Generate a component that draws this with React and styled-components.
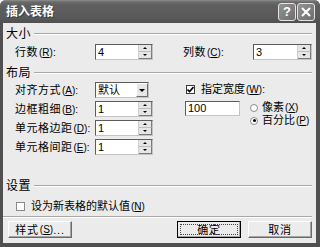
import styled, { createGlobalStyle } from "styled-components";

const GlobalStyle = createGlobalStyle`
  html, body { margin: 0; padding: 0; background: #fff; }
  body {
    font-family: "Liberation Sans", "Noto Sans CJK SC", sans-serif;
    font-size: 11px;
    color: #000;
  }
`;

const Window = styled.div`
  width: 320px;
  height: 247px;
  display: flex;
  flex-direction: column;
  background: #505050;
  border-radius: 6px 6px 0 0;
  overflow: hidden;
`;

const TitleBar = styled.div`
  height: 23px;
  flex: none;
  display: flex;
  align-items: center;
  padding: 0 5px 0 6px;
  background: linear-gradient(#8e8e8e 0, #6a6a6a 2px, #5e5e5e 6px, #5a5a5a 17px, #4f4f4f 23px);
`;

const Title = styled.div`
  flex: 1;
  color: #fff;
  font-weight: bold;
  font-size: 12px;
  line-height: 14px;
  text-shadow: 1px 1px 0 #3c3c3c;
`;

const CaptionButton = styled.div`
  width: 18px;
  height: 18px;
  box-sizing: border-box;
  border: 1px solid #e4e4e4;
  border-radius: 3px;
  background: linear-gradient(135deg, #929292, #6e6e6e);
  display: flex;
  align-items: center;
  justify-content: center;
  color: #fff;
  font-weight: bold;
  font-size: 13px;
  line-height: 13px;
  & + & { margin-left: 1px; }
`;

const Frame = styled.div`
  flex: 1;
  display: flex;
  padding: 0 4px 4px 3px;
`;

const Body = styled.div`
  flex: 1;
  background: #ebebeb;
  display: flex;
  flex-direction: column;
  padding: 0 4px 0 3px;
`;

const Legend = styled.div`
  display: flex;
  align-items: center;
  height: 12px;
  line-height: 12px;
  font-size: 12px;
  letter-spacing: 0.5px;
  margin-top: ${(p) => p.$top}px;
  &::after {
    content: "";
    flex: 1;
    border-top: 1px solid #a8a8a8;
    border-bottom: 1px solid #fff;
    margin-left: 3px;
  }
`;

const SizeRow = styled.div`
  display: grid;
  grid-template-columns: 80px 58px 1fr 59px;
  align-items: center;
  height: 16px;
  margin: 4px 0 0 9px;
`;

const Label = styled.div`
  white-space: nowrap;
  line-height: 12px;
  letter-spacing: ${(p) => (p.$tight ? "0" : "0.5px")};
  padding-left: ${(p) => p.$indent || 0}px;
`;

const Key = styled.span`
  font-size: 10px;
  letter-spacing: 0;
  margin-left: 1px;
`;

const LayoutArea = styled.div`
  display: flex;
  margin: 3px 0 0 9px;
`;

const LeftGrid = styled.div`
  display: grid;
  grid-template-columns: 80px 58px;
  grid-auto-rows: 16px;
  row-gap: 3px;
  align-items: center;
`;

const RightCol = styled.div`
  margin-left: 32px;
  display: flex;
  flex-direction: column;
`;

const CheckLine = styled.div`
  display: flex;
  align-items: center;
  height: 12px;
  margin: ${(p) => p.$margin || "0"};
  gap: 6px;
`;

const Box = styled.div`
  width: 9px;
  height: 9px;
  box-sizing: border-box;
  border: 1px solid ${(p) => (p.$on ? "#3a3a3a" : "#8a8a8a")};
  background: #fff;
  display: flex;
  align-items: center;
  justify-content: center;
`;

const WidthRow = styled.div`
  display: flex;
  margin-top: 6px;
`;

const TextField = styled.div`
  width: 55px;
  height: 15px;
  box-sizing: border-box;
  background: #fff;
  border: 1px solid;
  border-color: #5c5c5c #c4c4c4 #c4c4c4 #5c5c5c;
  padding-left: 2px;
  line-height: 13px;
`;

const Radios = styled.div`
  margin-left: 10px;
  display: flex;
  flex-direction: column;
`;

const RadioLine = styled.div`
  display: flex;
  align-items: center;
  height: 13px;
  gap: 4px;
  line-height: 12px;
`;

const RadioDot = styled.div`
  width: 8px;
  height: 8px;
  box-sizing: border-box;
  border-radius: 50%;
  border: 1px solid #8c8c8c;
  background: #fff;
  display: flex;
  align-items: center;
  justify-content: center;
  &::after {
    content: "";
    width: 3px;
    height: 3px;
    border-radius: 50%;
    background: ${(p) => (p.$on ? "#000" : "transparent")};
  }
`;

const SpinBox = styled.div`
  display: flex;
  height: 16px;
  box-sizing: border-box;
  background: #fff;
  border: 1px solid;
  border-color: #5c5c5c #c4c4c4 #c4c4c4 #5c5c5c;
`;

const FieldValue = styled.div`
  flex: 1;
  padding-left: 2px;
  line-height: 14px;
`;

const SpinButtons = styled.div`
  width: 13px;
  display: flex;
  flex-direction: column;
  background: #e6e6e6;
  border-left: 1px solid #cfcfcf;
`;

const SpinHalf = styled.div`
  flex: 1;
  display: flex;
  align-items: center;
  justify-content: center;
  border-bottom: 1px solid ${(p) => (p.$up ? "#bdbdbd" : "#7a7a7a")};
  border-right: 1px solid #7a7a7a;
  &::after {
    content: "";
    border-left: 2px solid transparent;
    border-right: 2px solid transparent;
    ${(p) => (p.$up ? "border-bottom: 2px solid #000;" : "border-top: 2px solid #000;")}
  }
`;

const Combo = styled(SpinBox)`
  width: 54px;
`;

const ComboArrow = styled.div`
  width: 10px;
  display: flex;
  align-items: center;
  justify-content: center;
  background: #e6e6e6;
  border: 1px solid;
  border-color: #fff #6e6e6e #6e6e6e #fff;
  &::after {
    content: "";
    border-left: 3px solid transparent;
    border-right: 3px solid transparent;
    border-top: 3px solid #000;
  }
`;

const Separator = styled.div`
  margin: 4px 0 0 -3px;
  border-top: 1px solid #a8a8a8;
  border-bottom: 1px solid #fff;
`;

const ButtonRow = styled.div`
  display: flex;
  margin: 3px 0 0 2px;
  gap: 7px;
`;

const Button = styled.div`
  width: 64px;
  height: 17px;
  box-sizing: border-box;
  display: flex;
  align-items: center;
  justify-content: center;
  background: #ececec;
  border: 1px solid;
  border-color: ${(p) => (p.$default ? "#000" : "#fff #6a6a6a #6a6a6a #fff")};
  box-shadow: inset -1px -1px 0 #a4a4a4;
  line-height: 12px;
  letter-spacing: 0.8px;
  margin-left: ${(p) => (p.$push ? "auto" : "0")};
  position: relative;
  ${(p) =>
    p.$default &&
    `&::before {
      content: "";
      position: absolute;
      inset: 2px;
      border: 1px dotted #444;
    }`}
`;

function Spin({ value }) {
  return (
    <SpinBox>
      <FieldValue>{value}</FieldValue>
      <SpinButtons>
        <SpinHalf $up />
        <SpinHalf />
      </SpinButtons>
    </SpinBox>
  );
}

function Check({ on }) {
  return (
    <Box $on={on}>
      {on && (
        <svg width="7" height="7" viewBox="0 0 7 7">
          <path d="M0.5 3.5 L2.6 5.6 L6.5 1" stroke="#000" strokeWidth="1.6" fill="none" />
        </svg>
      )}
    </Box>
  );
}

function Access({ k, colon }) {
  return (
    <Key>
      (<u>{k}</u>){colon ? ":" : ""}
    </Key>
  );
}

export default function App() {
  return (
    <>
      <GlobalStyle />
      <Window>
        <TitleBar>
          <Title>插入表格</Title>
          <CaptionButton>?</CaptionButton>
          <CaptionButton>
            <svg width="10" height="10" viewBox="0 0 10 10">
              <path d="M1 1 L9 9 M9 1 L1 9" stroke="#fff" strokeWidth="2" />
            </svg>
          </CaptionButton>
        </TitleBar>
        <Frame>
          <Body>
            <Legend $top={5}>大小</Legend>
            <SizeRow>
              <Label>行数<Access k="R" colon /></Label>
              <Spin value="4" />
              <Label $indent={30}>列数<Access k="C" colon /></Label>
              <Spin value="3" />
            </SizeRow>

            <Legend $top={7}>布局</Legend>
            <LayoutArea>
              <LeftGrid>
                <Label>对齐方式<Access k="A" colon /></Label>
                <Combo>
                  <FieldValue>默认</FieldValue>
                  <ComboArrow />
                </Combo>
                <Label>边框粗细<Access k="B" colon /></Label>
                <Spin value="1" />
                <Label>单元格边距<Access k="D" colon /></Label>
                <Spin value="1" />
                <Label>单元格间距<Access k="E" colon /></Label>
                <Spin value="1" />
              </LeftGrid>
              <RightCol>
                <CheckLine $margin="1px 0 0 1px">
                  <Check on />
                  <Label $tight>指定宽度<Access k="W" colon /></Label>
                </CheckLine>
                <WidthRow>
                  <TextField>100</TextField>
                  <Radios>
                    <RadioLine>
                      <RadioDot />
                      <Label $tight>像素<Access k="X" /></Label>
                    </RadioLine>
                    <RadioLine>
                      <RadioDot $on />
                      <Label $tight>百分比<Access k="P" /></Label>
                    </RadioLine>
                  </Radios>
                </WidthRow>
              </RightCol>
            </LayoutArea>

            <Legend $top={25}>设置</Legend>
            <CheckLine $margin="8px 0 0 10px">
              <Check />
              <Label $tight>设为新表格的默认值<Access k="N" /></Label>
            </CheckLine>
            <Separator />
            <ButtonRow>
              <Button>样式<Access k="S" />...</Button>
              <Button $default $push>确定</Button>
              <Button>取消</Button>
            </ButtonRow>
          </Body>
        </Frame>
      </Window>
    </>
  );
}
